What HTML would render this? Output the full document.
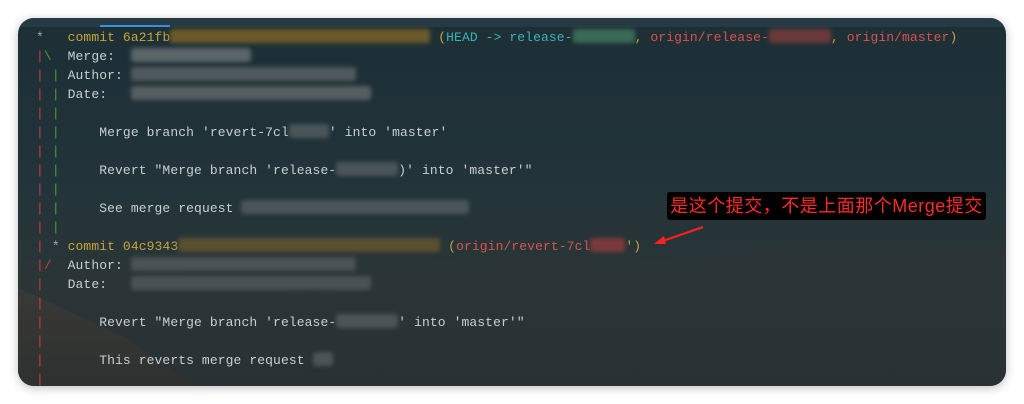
<!DOCTYPE html><html><head><style>
body{margin:0;width:1024px;height:404px;background:#fff;position:relative;overflow:hidden;font-family:"Liberation Mono",monospace}
.win{position:absolute;left:18px;top:18px;width:988px;height:368px;border-radius:16px;overflow:hidden;background:linear-gradient(180deg,#1d2f36 0%,#22343a 45%,#2a3536 70%,#263033 100%);box-shadow:0 2px 10px rgba(0,0,0,.25)}
.m1{position:absolute;left:0;right:0;top:200px;height:170px;background:linear-gradient(180deg,rgba(40,50,52,0),#2b3436 40%,#283133);clip-path:polygon(0 40%,15% 30%,30% 45%,50% 20%,65% 28%,80% 12%,100% 18%,100% 100%,0 100%)}
.m2{position:absolute;left:0;width:180px;top:270px;height:100px;background:linear-gradient(180deg,#4a4038,#34302a);opacity:.45;clip-path:polygon(0 0,60% 50%,100% 100%,0 100%)}
.tabs{position:absolute;left:0;right:0;top:0;height:9px;background:#263a44}
.tabu{position:absolute;left:82px;top:7px;width:70px;height:2px;background:#3d8de0}
pre{position:absolute;left:18px;top:10px;margin:0;font:13px/19px "Liberation Mono",monospace;color:#c8cfd2;letter-spacing:0.1px}
.r{color:#d33b3b}.g{color:#4f9a3a}.y{color:#c8a43a}.c{color:#3cb2b8}.o{color:#d9534f}
.b{display:inline-block;height:14px;vertical-align:-2px;filter:blur(2px);border-radius:3px}
.note{position:absolute;left:667px;top:192px;width:319px;height:28px;background:#000;border-radius:3px;color:#ff2a2a;font:18px/28px "Liberation Sans","Noto Sans CJK SC",sans-serif;text-align:center;letter-spacing:0.5px}
</style></head><body>
<div class="win"><div class="m1"></div><div class="m2"></div><div class="tabs"></div><div class="tabu"></div>
<pre><span style="color:#aaa">*</span>   <span class="y">commit 6a21fb<span class="b" style="width:260px;background:#6b5a2a"></span> (</span><span class="c">HEAD -&gt; release-<span class="b" style="width:62px;background:#3a6a55"></span></span><span class="y">, </span><span class="o">origin/release-<span class="b" style="width:62px;background:#6a3a3a"></span></span><span class="y">, </span><span class="o">origin/master</span><span class="y">)</span>
<span class="r">|</span><span class="g">\</span>  Merge:  <span class="b" style="width:120px;background:#5a6568"></span>
<span class="r">|</span> <span class="g">|</span> Author: <span class="b" style="width:225px;background:#50595c"></span>
<span class="r">|</span> <span class="g">|</span> Date:   <span class="b" style="width:240px;background:#555e60"></span>
<span class="r">|</span> <span class="g">|</span>
<span class="r">|</span> <span class="g">|</span>     Merge branch 'revert-7cl<span class="b" style="width:40px;background:#4a5558"></span>' into 'master'
<span class="r">|</span> <span class="g">|</span>
<span class="r">|</span> <span class="g">|</span>     Revert "Merge branch 'release-<span class="b" style="width:62px;background:#4a5558"></span>)' into 'master'"
<span class="r">|</span> <span class="g">|</span>
<span class="r">|</span> <span class="g">|</span>     See merge request <span class="b" style="width:228px;background:#4a5558"></span>
<span class="r">|</span> <span class="g">|</span>
<span class="r">|</span> <span style="color:#aaa">*</span> <span class="y">commit 04c9343<span class="b" style="width:262px;background:#5a5030"></span> (</span><span class="o">origin/revert-7cl<span class="b" style="width:35px;background:#7a3a3a"></span></span><span class="y">')</span>
<span class="r">|/</span>  Author: <span class="b" style="width:225px;background:#4a5255"></span>
<span class="r">|</span>   Date:   <span class="b" style="width:240px;background:#4a5255"></span>
<span class="r">|</span>
<span class="r">|</span>       Revert "Merge branch 'release-<span class="b" style="width:62px;background:#4a5558"></span>' into 'master'"
<span class="r">|</span>
<span class="r">|</span>       This reverts merge request <span class="b" style="width:20px;background:#4a5558"></span>
<span class="r">|</span></pre>
</div>
<div class="note">是这个提交，不是上面那个Merge提交</div>
<svg style="position:absolute;left:0;top:0" width="1024" height="404"><line x1="703" y1="227" x2="660" y2="242" stroke="#ff2020" stroke-width="2"/><polygon points="654,244 664,236 666,244" fill="#ff2020"/></svg>
</body></html>
